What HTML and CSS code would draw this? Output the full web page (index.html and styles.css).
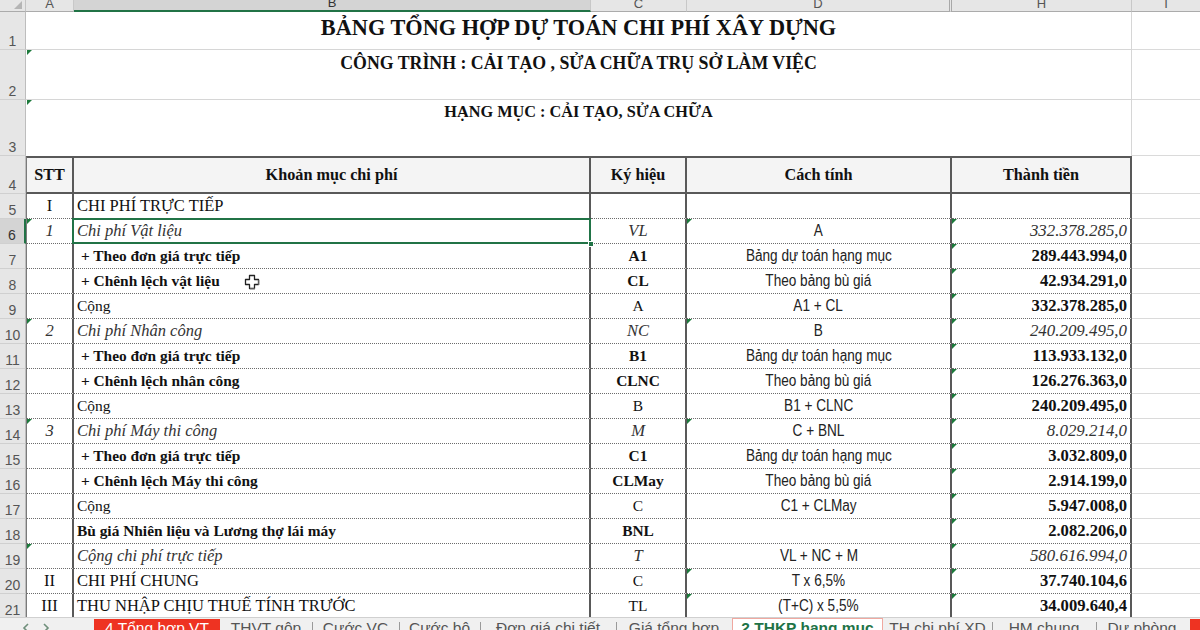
FILE: index.html
```html
<!DOCTYPE html>
<html lang="vi">
<head>
<meta charset="utf-8">
<title>Bảng tổng hợp dự toán chi phí xây dựng</title>
<link rel="stylesheet" href="styles.css">
</head>
<body>
<div class="app">
  <div class="sheet">
    <div class="row colhead">
      <div class="corner"><span class="corner-tri"></span></div>
      <div class="ch">A</div>
      <div class="ch selcol">B</div>
      <div class="ch">C</div>
      <div class="ch hid">D</div>
      <div class="ch">H</div>
      <div class="ch last">I</div>
    </div>

    <div class="row r1">
      <div class="rh">1</div>
      <div class="t t1">BẢNG TỔNG HỢP DỰ TOÁN CHI PHÍ XÂY DỰNG</div>
      <div class="ic"></div>
    </div>
    <div class="row r2">
      <div class="rh">2</div>
      <div class="t t2 tri">CÔNG TRÌNH : CẢI TẠO , SỬA CHỮA TRỤ SỞ LÀM VIỆC</div>
      <div class="ic"></div>
    </div>
    <div class="row r3">
      <div class="rh">3</div>
      <div class="t t3 tri">HẠNG MỤC : CẢI TẠO, SỬA CHỮA</div>
      <div class="ic"></div>
    </div>

    <div class="row r4">
      <div class="rh">4</div>
      <div class="c hd ca">STT</div>
      <div class="c hd">Khoản mục chi phí</div>
      <div class="c hd">Ký hiệu</div>
      <div class="c hd">Cách tính</div>
      <div class="c hd">Thành tiền</div>
      <div class="ic"></div>
    </div>

    <div class="row data">
      <div class="rh">5</div>
      <div class="c ca ctr up">I</div>
      <div class="c up">CHI PHÍ TRỰC TIẾP</div>
      <div class="c ctr"></div>
      <div class="c ctr sans"></div>
      <div class="c rt"></div>
      <div class="ic"></div>
    </div>
    <div class="row data">
      <div class="rh act">6</div>
      <div class="c ca ctr i tri">1</div>
      <div class="c i sel">Chi phí Vật liệu<span class="handle"></span></div>
      <div class="c ctr i">VL</div>
      <div class="c ctr sans tri"><span class="sq">A</span></div>
      <div class="c rt i num tri">332.378.285,0</div>
      <div class="ic"></div>
    </div>
    <div class="row data">
      <div class="rh">7</div>
      <div class="c ca"></div>
      <div class="c b ind">+ Theo đơn giá trực tiếp</div>
      <div class="c ctr b">A1</div>
      <div class="c ctr sans"><span class="sq">Bảng dự toán hạng mục</span></div>
      <div class="c rt b num tri">289.443.994,0</div>
      <div class="ic"></div>
    </div>
    <div class="row data">
      <div class="rh">8</div>
      <div class="c ca"></div>
      <div class="c b ind">+ Chênh lệch vật liệu
        <svg class="cursor" width="16" height="16" viewBox="0 0 16 16"><path d="M5.5 1.5h5v4h4v5h-4v4h-5v-4h-4v-5h4z" fill="#fff" stroke="#222" stroke-width="1.3" stroke-linejoin="round"/><path d="M11 15h-5M15 11v-5" stroke="#999" stroke-width="1" fill="none"/></svg>
      </div>
      <div class="c ctr b">CL</div>
      <div class="c ctr sans"><span class="sq">Theo bảng bù giá</span></div>
      <div class="c rt b num tri">42.934.291,0</div>
      <div class="ic"></div>
    </div>
    <div class="row data">
      <div class="rh">9</div>
      <div class="c ca"></div>
      <div class="c">Cộng</div>
      <div class="c ctr">A</div>
      <div class="c ctr sans"><span class="sq">A1 + CL</span></div>
      <div class="c rt b num tri">332.378.285,0</div>
      <div class="ic"></div>
    </div>
    <div class="row data">
      <div class="rh">10</div>
      <div class="c ca ctr i tri">2</div>
      <div class="c i">Chi phí Nhân công</div>
      <div class="c ctr i">NC</div>
      <div class="c ctr sans tri"><span class="sq">B</span></div>
      <div class="c rt i num tri">240.209.495,0</div>
      <div class="ic"></div>
    </div>
    <div class="row data">
      <div class="rh">11</div>
      <div class="c ca"></div>
      <div class="c b ind">+ Theo đơn giá trực tiếp</div>
      <div class="c ctr b">B1</div>
      <div class="c ctr sans"><span class="sq">Bảng dự toán hạng mục</span></div>
      <div class="c rt b num tri">113.933.132,0</div>
      <div class="ic"></div>
    </div>
    <div class="row data">
      <div class="rh">12</div>
      <div class="c ca"></div>
      <div class="c b ind">+ Chênh lệch nhân công</div>
      <div class="c ctr b">CLNC</div>
      <div class="c ctr sans"><span class="sq">Theo bảng bù giá</span></div>
      <div class="c rt b num tri">126.276.363,0</div>
      <div class="ic"></div>
    </div>
    <div class="row data">
      <div class="rh">13</div>
      <div class="c ca"></div>
      <div class="c">Cộng</div>
      <div class="c ctr">B</div>
      <div class="c ctr sans"><span class="sq">B1 + CLNC</span></div>
      <div class="c rt b num tri">240.209.495,0</div>
      <div class="ic"></div>
    </div>
    <div class="row data">
      <div class="rh">14</div>
      <div class="c ca ctr i tri">3</div>
      <div class="c i">Chi phí Máy thi công</div>
      <div class="c ctr i">M</div>
      <div class="c ctr sans tri"><span class="sq">C + BNL</span></div>
      <div class="c rt i num tri">8.029.214,0</div>
      <div class="ic"></div>
    </div>
    <div class="row data">
      <div class="rh">15</div>
      <div class="c ca"></div>
      <div class="c b ind">+ Theo đơn giá trực tiếp</div>
      <div class="c ctr b">C1</div>
      <div class="c ctr sans"><span class="sq">Bảng dự toán hạng mục</span></div>
      <div class="c rt b num tri">3.032.809,0</div>
      <div class="ic"></div>
    </div>
    <div class="row data">
      <div class="rh">16</div>
      <div class="c ca"></div>
      <div class="c b ind">+ Chênh lệch Máy thi công</div>
      <div class="c ctr b">CLMay</div>
      <div class="c ctr sans"><span class="sq">Theo bảng bù giá</span></div>
      <div class="c rt b num tri">2.914.199,0</div>
      <div class="ic"></div>
    </div>
    <div class="row data">
      <div class="rh">17</div>
      <div class="c ca"></div>
      <div class="c">Cộng</div>
      <div class="c ctr">C</div>
      <div class="c ctr sans"><span class="sq">C1 + CLMay</span></div>
      <div class="c rt b num tri">5.947.008,0</div>
      <div class="ic"></div>
    </div>
    <div class="row data">
      <div class="rh">18</div>
      <div class="c ca"></div>
      <div class="c b">Bù giá Nhiên liệu và Lương thợ lái máy</div>
      <div class="c ctr b">BNL</div>
      <div class="c ctr sans"></div>
      <div class="c rt b num tri">2.082.206,0</div>
      <div class="ic"></div>
    </div>
    <div class="row data">
      <div class="rh">19</div>
      <div class="c ca tri"></div>
      <div class="c i">Cộng chi phí trực tiếp</div>
      <div class="c ctr i">T</div>
      <div class="c ctr sans"><span class="sq">VL + NC + M</span></div>
      <div class="c rt i num tri">580.616.994,0</div>
      <div class="ic"></div>
    </div>
    <div class="row data">
      <div class="rh">20</div>
      <div class="c ca ctr up">II</div>
      <div class="c up">CHI PHÍ CHUNG</div>
      <div class="c ctr">C</div>
      <div class="c ctr sans tri"><span class="sq">T x 6,5%</span></div>
      <div class="c rt b num tri">37.740.104,6</div>
      <div class="ic"></div>
    </div>
    <div class="row data">
      <div class="rh">21</div>
      <div class="c ca ctr up">III</div>
      <div class="c up">THU NHẬP CHỊU THUẾ TÍNH TRƯỚC</div>
      <div class="c ctr">TL</div>
      <div class="c ctr sans tri"><span class="sq">(T+C) x 5,5%</span></div>
      <div class="c rt b num tri">34.009.640,4</div>
      <div class="ic"></div>
    </div>
  </div>

  <div class="tabbar">
    <div class="nav">
      <svg width="8" height="10" viewBox="0 0 8 10"><path d="M6 1L2 5l4 4" fill="none" stroke="#6f8f7b" stroke-width="1.6"/></svg>
      <svg width="8" height="10" viewBox="0 0 8 10"><path d="M2 1l4 4-4 4" fill="none" stroke="#6f8f7b" stroke-width="1.6"/></svg>
    </div>
    <div class="tab red tw-red">4 Tổng hợp VT</div>
    <div class="tab tw-thvt">THVT gộp</div>
    <div class="tab sep tw-vc">Cước VC</div>
    <div class="tab sep tw-bo">Cước bộ</div>
    <div class="tab sep tw-dg">Đơn giá chi tiết</div>
    <div class="tab sep tw-gth">Giá tổng hợp</div>
    <div class="tab active tw-act">2 THKP hạng mục</div>
    <div class="tab tw-th">TH chi phí XD</div>
    <div class="tab sep tw-hm">HM chung</div>
    <div class="tab sep tw-dp">Dự phòng</div>
    <div class="tab red edge"></div>
  </div>
</div>
</body>
</html>
```

FILE: styles.css
```css
* {
  box-sizing: border-box;
  margin: 0;
  padding: 0;
}

body {
  margin: 0;
  width: 1200px;
  height: 630px;
  overflow: hidden;
  background: #ffffff;
  font-family: "Liberation Serif", "Times New Roman", serif;
  color: #111;
}

.app {
  display: flex;
  flex-direction: column;
  height: 630px;
}

.sheet {
  flex: none;
  height: 617px;
  overflow: hidden;
}

.row {
  display: grid;
  grid-template-columns: 26px 48px 517px 96px 265px 180px 68px;
}

/* column header */
.colhead {
  height: 12px;
  background: #e6e6e6;
  font-family: "Liberation Sans", Arial, sans-serif;
  font-size: 13px;
  color: #555;
}

.corner {
  position: relative;
  border-right: 1px solid #c4c4c4;
  border-bottom: 1px solid #ababab;
}

.corner-tri {
  position: absolute;
  right: 3px;
  bottom: 2px;
  width: 0;
  height: 0;
  border-left: 8px solid transparent;
  border-bottom: 8px solid #b5b5b5;
}

.ch {
  display: flex;
  align-items: flex-end;
  justify-content: center;
  line-height: 1;
  padding-bottom: 1px;
  overflow: hidden;
  border-right: 1px solid #c8c8c8;
  border-bottom: 1px solid #ababab;
}

.ch.selcol {
  background: #d4d4d4;
  border-bottom: 2px solid #217346;
  color: #333;
}

.ch.hid {
  border-right: 3px double #a8a8a8;
}

.ch.last {
  border-right: none;
}

/* row headers */
.rh {
  display: flex;
  align-items: flex-end;
  justify-content: center;
  background: #e6e6e6;
  border-right: 1px solid #bdbdbd;
  border-bottom: 1px solid #d0d0d0;
  font-family: "Liberation Sans", Arial, sans-serif;
  font-size: 14px;
  line-height: 1;
  padding-bottom: 1px;
  color: #555;
}

.rh.act {
  background: #d4d4d4;
  border-right: 2px solid #217346;
  color: #333;
}

.ic {
  border-bottom: 1px solid #dadada;
}

/* title rows */
.r1 { height: 38px; }
.r2 { height: 50px; }
.r3 { height: 56px; }
.r4 { height: 38px; }
.data { height: 25px; }

.t {
  grid-column: 2 / 7;
  position: relative;
  text-align: center;
  font-weight: bold;
  line-height: 1;
  border-right: 1px solid #d6d6d6;
  border-bottom: 1px solid #d6d6d6;
  color: #111;
}

.t1 {
  font-size: 22.3px;
  padding-top: 5px;
}

.t2 {
  font-size: 17.8px;
  padding-top: 5px;
}

.t3 {
  font-size: 16.3px;
  padding-top: 4px;
  border-bottom: none;
}

/* table cells */
.c {
  position: relative;
  display: flex;
  align-items: center;
  padding: 0 3px;
  white-space: nowrap;
  overflow: visible;
  font-size: 15.5px;
  border-right: 2px solid #595959;
  border-bottom: 1px dotted #6c6c6c;
}

.c.ca {
  border-left: 1px solid #7a7a7a;
}

.r4 .c {
  border-top: 2px solid #595959;
  border-bottom: 2px solid #595959;
  background: #f4f4f4;
}

.hd {
  justify-content: center;
  font-weight: bold;
  font-size: 16.2px;
}

.ctr { justify-content: center; }
.rt { justify-content: flex-end; }
.up { font-size: 16.5px; }
.b { font-weight: bold; font-size: 15.4px; }
.i { font-style: italic; color: #333; font-size: 16.5px; }
.ind { padding-left: 7px; }

.num { font-size: 16.6px; }
.num.i { font-size: 16.9px; }

.sans {
  font-family: "Liberation Sans", Arial, sans-serif;
  font-size: 16px;
  color: #222;
}

.sq {
  display: inline-block;
  transform: scaleX(0.85);
}

/* green error triangles */
.tri::before {
  content: "";
  position: absolute;
  left: 0;
  top: 0;
  width: 0;
  height: 0;
  border-top: 5px solid #1d7a3c;
  border-right: 5px solid transparent;
}

.t.tri::before {
  left: 1px;
}

/* selection */
.sel::after {
  content: "";
  position: absolute;
  left: -2px;
  top: -1px;
  right: -2px;
  bottom: -1px;
  border: 2px solid #217346;
  pointer-events: none;
}

.handle {
  position: absolute;
  right: -5px;
  bottom: -4px;
  width: 6px;
  height: 6px;
  background: #217346;
  border: 1px solid #fff;
  z-index: 2;
}

.cursor {
  position: absolute;
  left: 170px;
  top: 5px;
}

/* tab bar */
.tabbar {
  flex: none;
  height: 13px;
  overflow: hidden;
  display: flex;
  align-items: flex-start;
  background: #f0f0f0;
  border-top: 1px solid #d0d0d0;
  font-family: "Liberation Sans", Arial, sans-serif;
  font-size: 15.5px;
  line-height: 17px;
  color: #555;
}

.nav {
  flex: none;
  width: 94px;
  display: flex;
  gap: 12px;
  padding: 5px 0 0 22px;
}

.tab {
  flex: none;
  position: relative;
  height: 20px;
  margin-top: 1px;
  text-align: center;
  white-space: nowrap;
}

.tab.sep::before {
  content: "";
  position: absolute;
  left: 0;
  top: 3px;
  height: 16px;
  border-left: 1px solid #9a9a9a;
}

.tab.red {
  background: #ee3322;
  color: #fff;
}

.tab.active {
  background: #fff;
  color: #217346;
  font-weight: bold;
  border: 1px solid #f0a8a0;
  border-bottom: none;
  margin-top: 0;
  line-height: 18px;
}

.tab.edge {
  width: 12px;
  margin-left: 2px;
}

.tw-red { width: 126px; }
.tw-thvt { width: 92px; }
.tw-vc { width: 87px; }
.tw-bo { width: 81px; }
.tw-dg { width: 136px; }
.tw-gth { width: 116px; }
.tw-act { width: 151px; }
.tw-th { width: 109px; }
.tw-hm { width: 104px; }
.tw-dp { width: 92px; }
```
